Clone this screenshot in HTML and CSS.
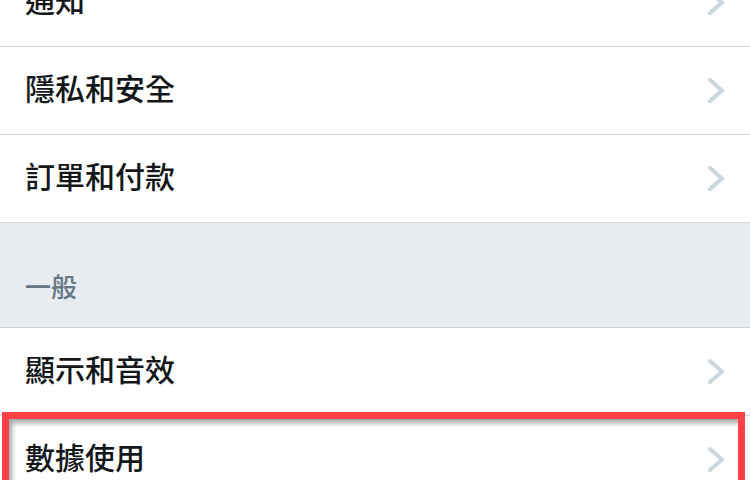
FILE: index.html
```html
<!DOCTYPE html>
<html lang="zh-Hant">
<head>
<meta charset="utf-8">
<link rel="stylesheet" href="styles.css">
</head>
<body>
<div class="list">
  <div class="row"><span class="label">通知</span><svg class="chev" viewBox="0 0 16 25"><path d="M2 2 L14 12.5 L2 23"/></svg></div>
  <div class="row"><span class="label">隱私和安全</span><svg class="chev" viewBox="0 0 16 25"><path d="M2 2 L14 12.5 L2 23"/></svg></div>
  <div class="row"><span class="label">訂單和付款</span><svg class="chev" viewBox="0 0 16 25"><path d="M2 2 L14 12.5 L2 23"/></svg></div>
  <div class="section">一般</div>
  <div class="row"><span class="label">顯示和音效</span><svg class="chev" viewBox="0 0 16 25"><path d="M2 2 L14 12.5 L2 23"/></svg></div>
  <div class="row"><span class="label">數據使用</span><svg class="chev" viewBox="0 0 16 25"><path d="M2 2 L14 12.5 L2 23"/></svg><div class="highlight"></div></div>
</div>
</body>
</html>
```
FILE: styles.css
```css
html, body {
  margin: 0;
  padding: 0;
  background: #ffffff;
  overflow: hidden;
}
body {
  width: 750px;
  height: 480px;
  font-family: "Noto Sans CJK TC", "Noto Sans", sans-serif;
}
.list {
  margin-top: -41px;
  display: flex;
  flex-direction: column;
}
.row {
  height: 87px;
  border-bottom: 1px solid #ccd6dd;
  display: flex;
  align-items: center;
  justify-content: space-between;
  padding: 0 26px 0 25px;
  background: #fff;
  position: relative;
}
.label {
  font-size: 30px;
  font-weight: 500;
  color: #14171a;
  line-height: 1;
  margin-bottom: 7px;
}
.chev {
  width: 16px;
  height: 25px;
  fill: none;
  stroke: #ccd6dd;
  stroke-width: 4;
  stroke-linecap: round;
  stroke-linejoin: round;
}
.section {
  background: #e6ecf0;
  border-bottom: 1px solid #ccd6dd;
  display: flex;
  align-items: flex-end;
  padding: 0 25px 28px;
  box-sizing: border-box;
  height: 105px;
  font-size: 26px;
  font-weight: 500;
  color: #657786;
  line-height: 1;
}
.highlight {
  position: absolute;
  left: 2px;
  top: -4px;
  width: 743px;
  height: 200px;
  box-sizing: border-box;
  border: 7px solid #fc4146;
  box-shadow: inset 3px 4px 5px rgba(0, 0, 0, 0.35);
}
```
